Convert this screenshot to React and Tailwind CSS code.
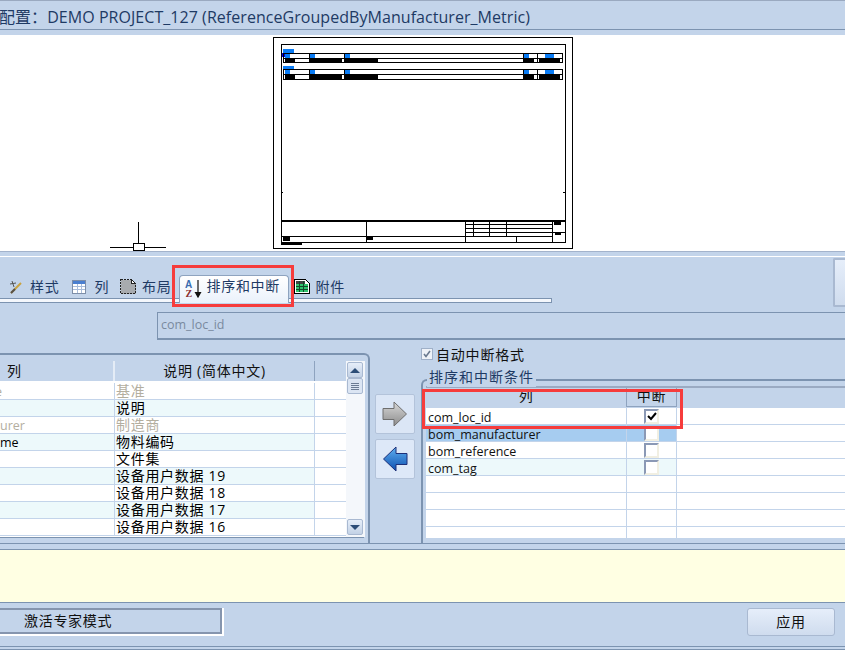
import React from 'react';

const leftRows = [
  { col: 'e', desc: '基准', muted: true },
  { col: '', desc: '说明' },
  { col: 'urer', desc: '制造商', muted: true },
  { col: 'me', desc: '物料编码' },
  { col: '', desc: '文件集' },
  { col: '', desc: '设备用户数据 19' },
  { col: '', desc: '设备用户数据 18' },
  { col: '', desc: '设备用户数据 17' },
  { col: '', desc: '设备用户数据 16' },
];

const rightRows = [
  { name: 'com_loc_id', checked: true },
  { name: 'bom_manufacturer', tint: 'bg-[#a6ccf0]' },
  { name: 'bom_reference' },
  { name: 'com_tag', tint: 'bg-[#edf9fb]' },
  { name: '' },
  { name: '' },
  { name: '' },
  { name: '' },
];

function R({ x, y, w, h, c = '#000' }) {
  return <rect x={x} y={y} width={w} height={h} fill={c} />;
}

function PaperPreview() {
  const blue = '#0a7cf5';
  const cols = [285, 310, 345, 524, 545];
  const blueW = [5, 5, 5, 5, 9];
  const blacks = [[285, 10], [310, 32], [345, 33], [524, 10], [539, 21]];
  const verts = [309, 344, 523, 537];
  return (
    <svg width="301" height="213" viewBox="273 37 301 213" shapeRendering="crispEdges">
      <rect x="273.5" y="37.5" width="299" height="211" fill="#fff" stroke="#000" />
      <rect x="281" y="44" width="284" height="198" fill="none" stroke="#000" />
      <R x={283} y={49} w={11} h={4} c={blue} />
      <R x={282} y={53} w={8} h={4} c="#0000e0" />
      <rect x="283.5" y="53.5" width="279" height="9" fill="none" stroke="#000" />
      <R x={283} y={58} w={280} h={1} />
      <R x={283} y={66} w={11} h={3} c={blue} />
      <rect x="283.5" y="69.5" width="279" height="10" fill="none" stroke="#000" />
      <R x={283} y={74} w={280} h={1} />
      {verts.map((v) => (
        <g key={v}>
          <R x={v} y={53} w={1} h={10} />
          <R x={v} y={69} w={1} h={11} />
        </g>
      ))}
      {cols.map((x, i) => (
        <g key={x}>
          <R x={x} y={54} w={blueW[i]} h={4} c={blue} />
          <R x={x} y={70} w={blueW[i]} h={4} c={blue} />
        </g>
      ))}
      {blacks.map(([x, w]) => (
        <g key={x}>
          <R x={x} y={59} w={w} h={3} />
          <R x={x} y={75} w={w} h={4} />
        </g>
      ))}
      <R x={524} y={58} w={10} h={4} />
      <R x={281} y={192} w={2} h={1} />
      <R x={563} y={192} w={2} h={1} />
      <R x={281} y={220} w={284} h={2} />
      <R x={366} y={222} w={1} h={20} />
      <R x={465} y={222} w={1} h={20} />
      <R x={552} y={222} w={1} h={20} />
      <R x={281} y={236} w={271} h={1} />
      <R x={465} y={224} w={87} h={1} />
      <R x={465} y={228} w={87} h={1} />
      <R x={465} y={232} w={87} h={1} />
      <R x={473} y={222} w={1} h={14} />
      <R x={489} y={222} w={1} h={14} />
      <R x={506} y={222} w={1} h={14} />
      <R x={516} y={236} w={1} h={6} />
      <R x={552} y={232} w={13} h={1} />
      <R x={554} y={222} w={7} h={3} />
      <R x={555} y={232} w={6} h={3} />
      <R x={283} y={237} w={7} h={4} />
      <R x={366} y={237} w={7} h={3} />
      <R x={281} y={242} w={21} h={3} />
    </svg>
  );
}

function WandIcon() {
  return (
    <svg width="14" height="14" viewBox="0 0 14 14" className="shrink-0">
      <path d="M2 13 L12 3" stroke="#c9a23f" strokeWidth="2" />
      <path d="M2 13 L6 9" stroke="#55504a" strokeWidth="2" />
      <path d="M3 1 L5 7 M1 4 L7 3" stroke="#555" strokeWidth="1" />
    </svg>
  );
}

function TableIcon() {
  return (
    <svg width="14" height="14" viewBox="0 0 14 14" shapeRendering="crispEdges" className="shrink-0">
      <rect x="0.5" y="0.5" width="13" height="13" fill="#fff" stroke="#7d8ea8" />
      <rect x="1" y="1" width="12" height="3" fill="#4a7fd0" />
      <path d="M1 6.5H13M1 9.5H13M5.5 4V13M9.5 4V13" stroke="#a9bddb" />
    </svg>
  );
}

function LayoutIcon() {
  return (
    <svg width="16" height="15" viewBox="0 0 16 15" shapeRendering="crispEdges" className="shrink-0">
      <path d="M0.5 0.5H11L15.5 4.5V14.5H0.5Z" fill="#a8abaf" stroke="#222" strokeDasharray="2 1" />
      <path d="M11 .5V4.5H15.5" fill="#fff" stroke="#222" />
    </svg>
  );
}

function SortIcon() {
  return (
    <svg width="17" height="19" viewBox="0 0 17 19" className="shrink-0">
      <text x="0" y="8.5" fontSize="10" fontWeight="700" fill="#3a6cb0" fontFamily="'Liberation Sans', sans-serif">A</text>
      <text x="0.5" y="18" fontSize="10" fontWeight="700" fill="#8a3030" fontFamily="'Liberation Serif', serif">Z</text>
      <path d="M13 1 V17 M10.5 13.5 L13 18 L15.5 13.5 Z" stroke="#111" strokeWidth="1.2" fill="#111" />
    </svg>
  );
}

function GridIcon() {
  return (
    <svg width="16" height="15" viewBox="0 0 16 15" shapeRendering="crispEdges" className="shrink-0">
      <path d="M0.5 0.5H11.5L15.5 4.5V14.5H0.5Z" fill="#fff" stroke="#000" />
      <rect x="2" y="2" width="9" height="3" fill="#444" />
      <rect x="2" y="5" width="12" height="8" fill="#2fc46e" />
      <path d="M2 7.5H14M2 10.5H14M5.5 2V13M9.5 2V13" stroke="#124a2b" />
    </svg>
  );
}

function ArrowRight() {
  return (
    <svg width="26" height="26" viewBox="0 0 26 26">
      <defs>
        <linearGradient id="grayArrow" x1="0" y1="0" x2="0" y2="1">
          <stop offset="0" stopColor="#d8d8d8" />
          <stop offset="1" stopColor="#8c8c8c" />
        </linearGradient>
      </defs>
      <path d="M1 7.5H12V1L24.5 13L12 25V18.5H1Z" fill="url(#grayArrow)" stroke="#6e6e6e" />
    </svg>
  );
}

function ArrowLeft() {
  return (
    <svg width="26" height="26" viewBox="0 0 26 26">
      <defs>
        <linearGradient id="blueArrow" x1="0" y1="0" x2="0" y2="1">
          <stop offset="0" stopColor="#5fb0f0" />
          <stop offset="1" stopColor="#0d4fb0" />
        </linearGradient>
      </defs>
      <path d="M25 7.5H14V1L1.5 13L14 25V18.5H25Z" fill="url(#blueArrow)" stroke="#1c2f78" />
    </svg>
  );
}

function Check({ checked }) {
  return (
    <div className="flex h-[15px] w-[15px] items-center justify-center border-2 border-b-[#f1efe2] border-l-[#8b99b5] border-r-[#f1efe2] border-t-[#8b99b5] bg-white">
      {checked && (
        <svg width="10" height="9" viewBox="0 0 10 9">
          <path d="M1 4 L4 7 L9 1" fill="none" stroke="#000" strokeWidth="2" />
        </svg>
      )}
    </div>
  );
}

function ScrollBtn({ down }) {
  return (
    <div className="flex h-[16px] w-[16px] items-center justify-center rounded-[2px] border border-[#a9b9d1] bg-gradient-to-b from-[#e6eef9] to-[#c3d2e6]">
      <div className={`h-0 w-0 border-x-[5px] border-x-transparent ${down ? 'border-t-[5px] border-t-[#2c4d77]' : 'border-b-[5px] border-b-[#2c4d77]'}`} />
    </div>
  );
}

function ScrollBar() {
  return (
    <div className="flex w-[19px] flex-col bg-[#f4f7fb] pl-[1px] pr-[2px] pt-[1px]">
      <ScrollBtn />
      <div className="flex h-[16px] flex-col items-center justify-center gap-[1px] rounded-[2px] border border-[#a9b9d1] bg-[#dbe5f3]">
        <div className="h-px w-[8px] bg-[#6c7c94]" />
        <div className="h-px w-[8px] bg-[#6c7c94]" />
        <div className="h-px w-[8px] bg-[#6c7c94]" />
        <div className="h-px w-[8px] bg-[#6c7c94]" />
      </div>
      <div className="flex-1" />
      <div className="mb-[2px]">
        <ScrollBtn down />
      </div>
    </div>
  );
}

function ColumnsTable() {
  return (
    <div className="flex h-[177px] border-b border-[#7c93b0] bg-white">
      <div className="w-[346px]">
        <div className="flex h-[22px] border-b-2 border-white bg-[#c3d4ea] text-[14px] tracking-[0.75px] text-[#101010]">
          <div className="w-[115px] border-r-2 border-[#e4ecf6] pl-[7px] leading-[19px]">列</div>
          <div className="w-[199px] text-center leading-[19px]">说明 (简体中文)</div>
          <div className="w-[32px] border-l border-[#8ea3bf]" />
        </div>
        {leftRows.map((row, i) => (
          <div key={i} className="flex h-[17px] border-b border-[#c3d4ea] text-[14px] leading-[15px]">
            <div className={`w-[115px] overflow-hidden whitespace-nowrap border-r border-[#c3d4ea] ${i % 2 ? 'bg-[#edf9fb]' : 'bg-white'} ${row.muted ? 'text-[#b3ae9f]' : 'text-black'}`}>
              <span className={`text-[12.5px] ${row.col === 'e' ? 'ml-[-5px]' : ''}`}>{row.col}</span>
            </div>
            <div className={`w-[199px] whitespace-nowrap pl-[1px] tracking-[0.7px] ${i % 2 ? 'bg-[#edf9fb]' : 'bg-white'} ${row.muted ? 'text-[#b3ae9f]' : 'text-black'}`}>
              {row.desc}
            </div>
            <div className="w-[32px] border-l border-[#c3d4ea]" />
          </div>
        ))}
      </div>
      <ScrollBar />
    </div>
  );
}

function SortTable() {
  return (
    <div className="ml-[3px] h-[152px] overflow-hidden border-t-2 border-[#9aaac2] bg-white">
      <div className="flex h-[19px] bg-[#c3d4ea] text-[14px] leading-[16px] tracking-[0.7px] text-[#101010]">
        <div className="w-[201px] border-r border-[#8ea3bf] text-center">列</div>
        <div className="w-[50px] border-b border-r border-[#8ea3bf] text-center">中断</div>
      </div>
      <div className="h-px w-full bg-[#c3d4ea]" />
      {rightRows.map((row, i) => (
        <div key={i} className="flex h-[17px] border-b border-[#c3d4ea] text-[12.5px] leading-[19px] text-[#111]">
          <div className={`w-[201px] whitespace-nowrap border-r border-[#c3d4ea] pl-[2px] ${row.tint || 'bg-white'}`}>{row.name}</div>
          <div className={`flex w-[50px] justify-center border-r border-[#c3d4ea] pt-[1px] ${row.tint || 'bg-white'}`}>
            {row.name && <Check checked={row.checked} />}
          </div>
        </div>
      ))}
    </div>
  );
}

export default function App() {
  return (
    <div className="relative flex h-[650px] w-[845px] flex-col overflow-hidden bg-[#c3d4ea] font-['Open_Sans','Noto_Sans_CJK_SC',sans-serif]">
      {/* title */}
      <div className="h-[30px] shrink-0 overflow-hidden whitespace-nowrap border-b border-t border-b-[#7c93b0] border-t-[#9aa9c0] text-[16px] leading-[33px] tracking-[0.05px] text-[#1e3a64]">
        <span className="ml-[-1px]">配置：DEMO PROJECT_127 (ReferenceGroupedByManufacturer_Metric)</span>
      </div>
      <div className="h-[5px] shrink-0" />

      {/* drawing preview */}
      <div className="relative h-[216px] shrink-0 bg-white pl-[273px] pt-[2px]">
        <PaperPreview />
        <svg width="56" height="30" viewBox="0 0 56 30" shapeRendering="crispEdges" className="absolute left-[110px] top-[186px]">
          <path d="M28.5 1V22M0 26.5H56" stroke="#000" />
          <rect x="23.5" y="22.5" width="11" height="7" fill="#fff" stroke="#000" />
        </svg>
      </div>
      <div className="h-[5px] shrink-0 border-t border-[#a3b3cc]" />
      <div className="h-px shrink-0 bg-white" />

      {/* tabs */}
      <div className="flex h-[55px] shrink-0 justify-between">
        <div className="w-[552px] pt-[18px]">
          <div className="relative z-10 flex h-[23px] items-center pl-[9px] text-[14px] tracking-[0.7px] text-[#1e3a64]">
            <WandIcon />
            <span className="ml-[7px]">样式</span>
            <div className="ml-[13px]"><TableIcon /></div>
            <span className="ml-[8px]">列</span>
            <div className="ml-[11px]"><LayoutIcon /></div>
            <span className="ml-[6px]">布局</span>
            <div className="-mb-[5px] ml-[7px] flex h-[28px] w-[110px] items-start rounded-t-[4px] border border-b-0 border-[#8ea3bf] bg-gradient-to-b from-[#ffffff] to-[#eaf1fb] pl-[5px] pt-[3px]">
              <SortIcon />
              <span className="-mt-[2px] ml-[5px] leading-[18px]">排序和中断</span>
            </div>
            <div className="ml-[5px]"><GridIcon /></div>
            <span className="ml-[6px]">附件</span>
          </div>
          <div className="h-[5px] border border-l-0 border-[#7c93b0] bg-[#f4f7fc]" />
        </div>
        <div className="mt-[1px] h-[49px] w-[12px] rounded-l-[2px] border-2 border-r-0 border-[#a9b9d1] bg-gradient-to-b from-[#e6eefa] to-[#cfdcee]" />
      </div>

      {/* filter box */}
      <div className="ml-[157px] h-[28px] shrink-0 border-b-2 border-l border-t border-[#7c93b0] pl-[3px] text-[12.5px] leading-[24px] text-[#7a8a9f]">
        com_loc_id
      </div>

      {/* main panels */}
      <div className="flex h-[204px] shrink-0 border-b border-[#7c93b0]">
        <div className="mt-[13px] h-[190px] w-[370px] shrink-0 rounded-tr-[6px] border-r-2 border-t-2 border-[#7c93b0] pr-[4px] pt-[6px]">
          <ColumnsTable />
        </div>
        <div className="ml-[5px] mt-[54px] flex w-[46px] shrink-0 flex-col gap-[5px]">
          <div className="flex h-[40px] w-[40px] items-center justify-center rounded-[2px] border border-[#b3c3da] bg-[#dbe6f6]"><ArrowRight /></div>
          <div className="flex h-[40px] w-[40px] items-center justify-center rounded-[2px] border border-[#b3c3da] bg-[#dde8f8]"><ArrowLeft /></div>
        </div>
        <div className="flex-1">
          <div className="mt-[6px] flex h-[16px] items-center">
            <div className="flex h-[12px] w-[12px] items-center justify-center border border-[#9fb0c8] bg-[#eef2f8]">
              <svg width="8" height="8" viewBox="0 0 8 8"><path d="M1 4 L3 6.5 L7 1" fill="none" stroke="#6a7a90" strokeWidth="1.6" /></svg>
            </div>
            <span className="ml-[3px] text-[14px] tracking-[0.8px] text-[#101010]">自动中断格式</span>
          </div>
          <div className="relative mt-[17px] h-[164px] rounded-tl-[6px] border-l-2 border-t-2 border-[#7c93b0] pt-[5px]">
            <span className="absolute left-[4px] top-[-14px] bg-[#c3d4ea] px-[2px] text-[14px] leading-[20px] tracking-[1px] text-[#1e3a64]">排序和中断条件</span>
            <SortTable />
          </div>
        </div>
      </div>

      <div className="h-[5px] shrink-0" />

      {/* message strip */}
      <div className="h-[54px] shrink-0 border-y border-[#7c93b0] bg-[#ffffe3]" />

      {/* footer */}
      <div className="flex h-[44px] shrink-0 items-start justify-between border-b border-[#7c93b0] pr-[10px] pt-[5px]">
        <div className="h-[28px] w-[224px] border-b-2 border-r-2 border-white">
          <div className="h-full w-full border-2 border-l-0 border-[#8595ae] pl-[24px] text-[14px] leading-[22px] tracking-[0.7px] text-[#101010]">
            激活专家模式
          </div>
        </div>
        <div className="h-[28px] w-[88px] rounded-[3px] border border-[#a9b9d1] bg-gradient-to-b from-[#e6eefa] to-[#cfdcee] text-center text-[14px] leading-[25px] tracking-[0.7px] text-[#101010]">
          应用
        </div>
      </div>
      <div className="h-[2px] shrink-0" />
      <div className="h-px shrink-0 bg-[#7c93b0]" />

      {/* red annotation boxes */}
      <div className="absolute left-[172px] top-[265px] h-[42px] w-[122px] border-[3px] border-[#f63c3c]" />
      <div className="absolute left-[422px] top-[389px] h-[40px] w-[261px] border-[3px] border-[#f63c3c]" />
    </div>
  );
}
